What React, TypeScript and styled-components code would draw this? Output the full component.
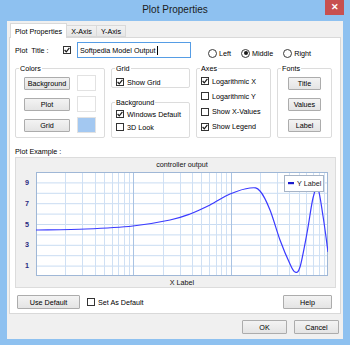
import React from 'react';
import styled, { createGlobalStyle } from 'styled-components';

const Global = createGlobalStyle`
  html, body { margin: 0; padding: 0; }
  body {
    width: 350px; height: 345px; overflow: hidden;
    font-family: "Liberation Sans", Arial, sans-serif;
    font-size: 7.2px; color: #000;
  }
  * { box-sizing: border-box; }
`;

const Window = styled.div`
  width: 350px; height: 345px; background: #8ec1f0;
  display: flex; flex-direction: column;
`;
const TitleBar = styled.div`
  height: 21px; flex-shrink: 0;
  display: grid; grid-template-columns: 1fr auto 1fr; align-items: start;
`;
const TitleText = styled.div`
  grid-column: 2; font-size: 10px; line-height: 20px; color: #1b1b1b;
`;
const CloseButton = styled.div`
  grid-column: 3; justify-self: end; margin-right: 6px;
  width: 19px; height: 15px; background: #c75050; color: #fff;
  display: flex; align-items: center; justify-content: center;
  font-size: 9px; font-weight: bold; line-height: 1;
`;
const Client = styled.div`
  flex: 1; margin: 0 7px 6px; background: #f0f0f0;
  display: flex; flex-direction: column; padding: 2px 2px 0;
`;
const TabStrip = styled.div`
  height: 14px; display: flex; align-items: flex-end; padding-left: 1px;
  position: relative; z-index: 1;
`;
const Tab = styled.div<{ $active?: boolean }>`
  height: ${p => (p.$active ? 15 : 12)}px;
  margin-bottom: ${p => (p.$active ? -1 : 0)}px;
  margin-left: ${p => (p.$active ? 0 : -1)}px;
  padding: 0 4px;
  display: flex; align-items: center;
  border: 1px solid #d9d9d9; border-bottom: ${p => (p.$active ? 'none' : '1px solid #d9d9d9')};
  background: ${p => (p.$active ? '#fff' : 'linear-gradient(#f2f2f2, #e6e6e6)')};
  &:first-child { margin-left: 0; }
`;
const Panel = styled.div`
  height: 277px; border: 1px solid #d9d9d9; background: #fff;
  padding: 4px 4px 0 5px; display: flex; flex-direction: column;
`;
const TitleRow = styled.div`
  height: 16px; display: flex; align-items: center;
`;
const FieldLabel = styled.div`
  width: 48px; white-space: pre;
`;
const TextField = styled.div`
  width: 114px; height: 16px; border: 1px solid #569de5; background: #fff;
  display: flex; align-items: center; padding-left: 2px; white-space: pre;
`;
const Caret = styled.span`
  width: 1px; height: 9px; background: #000; margin-left: 1px;
`;
const RadioGroup = styled.div`
  margin-left: 17px; align-self: flex-end; display: flex; gap: 10px; height: 10px;
`;
const RadioItem = styled.div`
  display: flex; align-items: center; gap: 2px;
`;
const RadioCircle = styled.span<{ $on?: boolean }>`
  width: 9px; height: 9px; border-radius: 50%; border: 1px solid #3a3a3a; background: #fff;
  display: flex; align-items: center; justify-content: center;
  &::after {
    content: ''; width: 4px; height: 4px; border-radius: 50%;
    background: ${p => (p.$on ? '#1a1a1a' : 'transparent')};
  }
`;
const CheckRow = styled.div<{ $ml?: number; $mr?: number }>`
  display: flex; align-items: center; gap: 3px; height: 10px;
  margin-left: ${p => p.$ml ?? 0}px; margin-right: ${p => p.$mr ?? 0}px;
  white-space: nowrap;
`;
const CheckBoxSquare = styled.span`
  width: 8px; height: 8px; border: 1px solid #333; background: #fff; flex-shrink: 0;
  display: flex; align-items: center; justify-content: center;
`;
const GroupsRow = styled.div`
  margin-top: 6px; height: 74px;
  display: grid; grid-template-columns: 90px 79px 75px 55px; column-gap: 6px;
`;
const GroupColumn = styled.div`
  display: flex; flex-direction: column; gap: 10px;
`;
const GroupBox = styled.fieldset<{ $h?: number }>`
  margin: 0; padding: 0; min-width: 0;
  height: ${p => (p.$h ? `${p.$h}px` : '100%')};
  border: 1px solid #dcdcdc; border-radius: 2px;
`;
const Legend = styled.legend`
  padding: 0 1px; margin-left: 3px; line-height: 9px;
`;
const ColorsBody = styled.div`
  padding: 2px 0 0 8px;
  display: grid; grid-template-columns: 46px 19px; grid-auto-rows: 16px;
  column-gap: 7px; row-gap: 5px; align-items: center;
`;
const StackBody = styled.div<{ $pt: number; $gap: number; $center?: boolean; $pl?: number }>`
  padding: ${p => p.$pt}px 0 0 ${p => p.$pl ?? 0}px;
  display: flex; flex-direction: column; gap: ${p => p.$gap}px;
  align-items: ${p => (p.$center ? 'center' : 'flex-start')};
`;
const Button = styled.div<{ $w: number; $h?: number; $ml?: number; $mr?: number; $push?: boolean }>`
  width: ${p => p.$w}px; height: ${p => p.$h ?? 13}px;
  margin-left: ${p => (p.$push ? 'auto' : `${p.$ml ?? 0}px`)}; margin-right: ${p => p.$mr ?? 0}px;
  border: 1px solid #acacac; border-radius: 1px;
  background: linear-gradient(#f3f3f3, #e4e4e4);
  display: flex; align-items: center; justify-content: center; flex-shrink: 0;
`;
const Swatch = styled.div<{ $color: string }>`
  width: 19px; height: 16px; border: 1px solid #e2e2e2; background: ${p => p.$color};
`;
const SectionLabel = styled.div`
  margin-top: 9px; line-height: 10px; height: 10px;
`;
const ChartBox = styled.div`
  height: 131px; border: 1px solid #dcdcdc; background: #f0f0f0;
  display: flex; flex-direction: column;
`;
const ChartTitle = styled.div`
  height: 13px; line-height: 13px; text-align: center; padding: 0 7px 0 20px; color: #111;
`;
const XLabel = styled.div`
  flex: 1; display: flex; align-items: center; justify-content: center;
  padding: 0 7px 0 20px; color: #111;
`;
const BottomRow = styled.div`
  margin-top: 7px; height: 14px; display: flex; align-items: center;
`;
const Footer = styled.div`
  display: flex; justify-content: flex-end; gap: 7px; padding: 6px 2px 0;
`;

const CheckBox: React.FC<{ checked?: boolean; label?: string; ml?: number; mr?: number }> = ({ checked, label, ml, mr }) => (
  <CheckRow $ml={ml} $mr={mr}>
    <CheckBoxSquare>
      {checked && (
        <svg width="6" height="6" viewBox="0 0 6 6">
          <polyline points="0.6,3 2.3,4.9 5.4,0.9" fill="none" stroke="#1a1a1a" strokeWidth="1.2" />
        </svg>
      )}
    </CheckBoxSquare>
    {label && <span>{label}</span>}
  </CheckRow>
);

const Radio: React.FC<{ on?: boolean; label: string }> = ({ on, label }) => (
  <RadioItem>
    <RadioCircle $on={on} />
    <span>{label}</span>
  </RadioItem>
);

// chart geometry (svg coords; origin at chart inner left, page y = 171)
const PX0 = 20, PX1 = 312, PY0 = 1, PY1 = 105;
const decade = (PX1 - PX0) / 3;
const vLines: { x: number; major: boolean }[] = [];
for (let d = 0; d < 3; d++) {
  for (let k = 1; k < 10; k++) {
    vLines.push({ x: PX0 + d * decade + Math.log10(k) * decade, major: k === 1 });
  }
}
const yOf = (v: number) => PY1 - v * ((PY1 - PY0) / 10);

const pts: [number, number][] = [
  [20, 59], [70, 58], [117, 55], [154, 49], [174, 43], [194, 34], [214, 23],
  [234, 17], [244, 20], [254, 39], [264, 69], [274, 93], [279, 101], [284, 96],
  [291, 62], [297, 27], [302, 18], [307, 45], [312, 81],
];
function catmull(p: [number, number][]) {
  let d = `M${p[0][0]},${p[0][1]}`;
  for (let i = 0; i < p.length - 1; i++) {
    const p0 = p[i - 1] || p[i], p1 = p[i], p2 = p[i + 1], p3 = p[i + 2] || p[i + 1];
    const c1x = p1[0] + (p2[0] - p0[0]) / 6, c1y = p1[1] + (p2[1] - p0[1]) / 6;
    const c2x = p2[0] - (p3[0] - p1[0]) / 6, c2y = p2[1] - (p3[1] - p1[1]) / 6;
    d += ` C${c1x.toFixed(1)},${c1y.toFixed(1)} ${c2x.toFixed(1)},${c2y.toFixed(1)} ${p2[0]},${p2[1]}`;
  }
  return d;
}

const Chart: React.FC = () => (
  <svg width="319" height="106" viewBox="0 0 319 106" style={{ display: 'block' }}>
    <rect x={PX0} y={PY0} width={PX1 - PX0} height={PY1 - PY0} fill="#fff" />
    {Array.from({ length: 9 }, (_, i) => i + 1).map(v => (
      <line key={`h${v}`} x1={PX0} x2={PX1} y1={yOf(v) + 0.5} y2={yOf(v) + 0.5} stroke="#c9dcf2" strokeWidth="1" />
    ))}
    {vLines.map((l, i) => (
      <line key={`v${i}`} x1={Math.round(l.x) + 0.5} x2={Math.round(l.x) + 0.5} y1={PY0} y2={PY1}
        stroke={l.major ? '#a9c3e3' : '#cfe0f4'} strokeWidth="1" />
    ))}
    <rect x={PX0 + 0.5} y={PY0 + 0.5} width={PX1 - PX0 - 1} height={PY1 - PY0 - 1} fill="none" stroke="#9fb7d6" />
    <clipPath id="plotclip"><rect x={PX0} y={PY0} width={PX1 - PX0} height={PY1 - PY0} /></clipPath>
    <path d={catmull(pts)} fill="none" stroke="#3a3aff" strokeWidth="1.2" clipPath="url(#plotclip)" />
    {[9, 7, 5, 3, 1].map(v => (
      <text key={`t${v}`} x="11" y={yOf(v) + 2.6} textAnchor="middle" fontSize="7.2" fontWeight="bold"
        fill="#2a2a80" fontFamily="Liberation Sans, Arial, sans-serif">{v}</text>
    ))}
    <rect x="268.5" y="4.5" width="39" height="16" fill="#fff" stroke="#a7b4c6" />
    <rect x="272" y="11" width="6" height="2.2" fill="#1a1acc" />
    <text x="281" y="15" fontSize="7.2" fill="#1a1a1a" fontFamily="Liberation Sans, Arial, sans-serif">Y Label</text>
  </svg>
);

export default function App() {
  return (
    <>
      <Global />
      <Window>
        <TitleBar>
          <TitleText>Plot Properties</TitleText>
          <CloseButton>✕</CloseButton>
        </TitleBar>
        <Client>
          <TabStrip>
            <Tab $active>Plot Properties</Tab>
            <Tab>X-Axis</Tab>
            <Tab>Y-Axis</Tab>
          </TabStrip>
          <Panel>
            <TitleRow>
              <FieldLabel>{'Plot  Title :'}</FieldLabel>
              <CheckBox checked mr={6} />
              <TextField>Softpedia Model Output<Caret /></TextField>
              <RadioGroup>
                <Radio label="Left" />
                <Radio on label="Middle" />
                <Radio label="Right" />
              </RadioGroup>
            </TitleRow>
            <GroupsRow>
              <GroupBox>
                <Legend>Colors</Legend>
                <ColorsBody>
                  <Button $w={46}>Background</Button>
                  <Swatch $color="#ffffff" />
                  <Button $w={46}>Plot</Button>
                  <Swatch $color="#ffffff" />
                  <Button $w={46}>Grid</Button>
                  <Swatch $color="#a3c8f1" />
                </ColorsBody>
              </GroupBox>
              <GroupColumn>
                <GroupBox $h={24}>
                  <Legend>Grid</Legend>
                  <StackBody $pt={4} $gap={0} $pl={4}>
                    <CheckBox checked label="Show Grid" />
                  </StackBody>
                </GroupBox>
                <GroupBox $h={40}>
                  <Legend>Background</Legend>
                  <StackBody $pt={2} $gap={3} $pl={4}>
                    <CheckBox checked label="Windows Default" />
                    <CheckBox label="3D Look" />
                  </StackBody>
                </GroupBox>
              </GroupColumn>
              <GroupBox>
                <Legend>Axes</Legend>
                <StackBody $pt={3} $gap={5.3} $pl={4}>
                  <CheckBox checked label="Logarithmic X" />
                  <CheckBox label="Logarithmic Y" />
                  <CheckBox label="Show X-Values" />
                  <CheckBox checked label="Show Legend" />
                </StackBody>
              </GroupBox>
              <GroupBox>
                <Legend>Fonts</Legend>
                <StackBody $pt={3.5} $gap={8} $center>
                  <Button $w={33}>Title</Button>
                  <Button $w={33}>Values</Button>
                  <Button $w={33}>Label</Button>
                </StackBody>
              </GroupBox>
            </GroupsRow>
            <SectionLabel>Plot Example :</SectionLabel>
            <ChartBox>
              <ChartTitle>controller output</ChartTitle>
              <Chart />
              <XLabel>X Label</XLabel>
            </ChartBox>
            <BottomRow>
              <Button $w={63} $h={14} $ml={2}>Use Default</Button>
              <CheckBox label="Set As Default" ml={7} />
              <Button $w={49} $h={14} $mr={4} $push>Help</Button>
            </BottomRow>
          </Panel>
          <Footer>
            <Button $w={45} $h={14}>OK</Button>
            <Button $w={45} $h={14}>Cancel</Button>
          </Footer>
        </Client>
      </Window>
    </>
  );
}
